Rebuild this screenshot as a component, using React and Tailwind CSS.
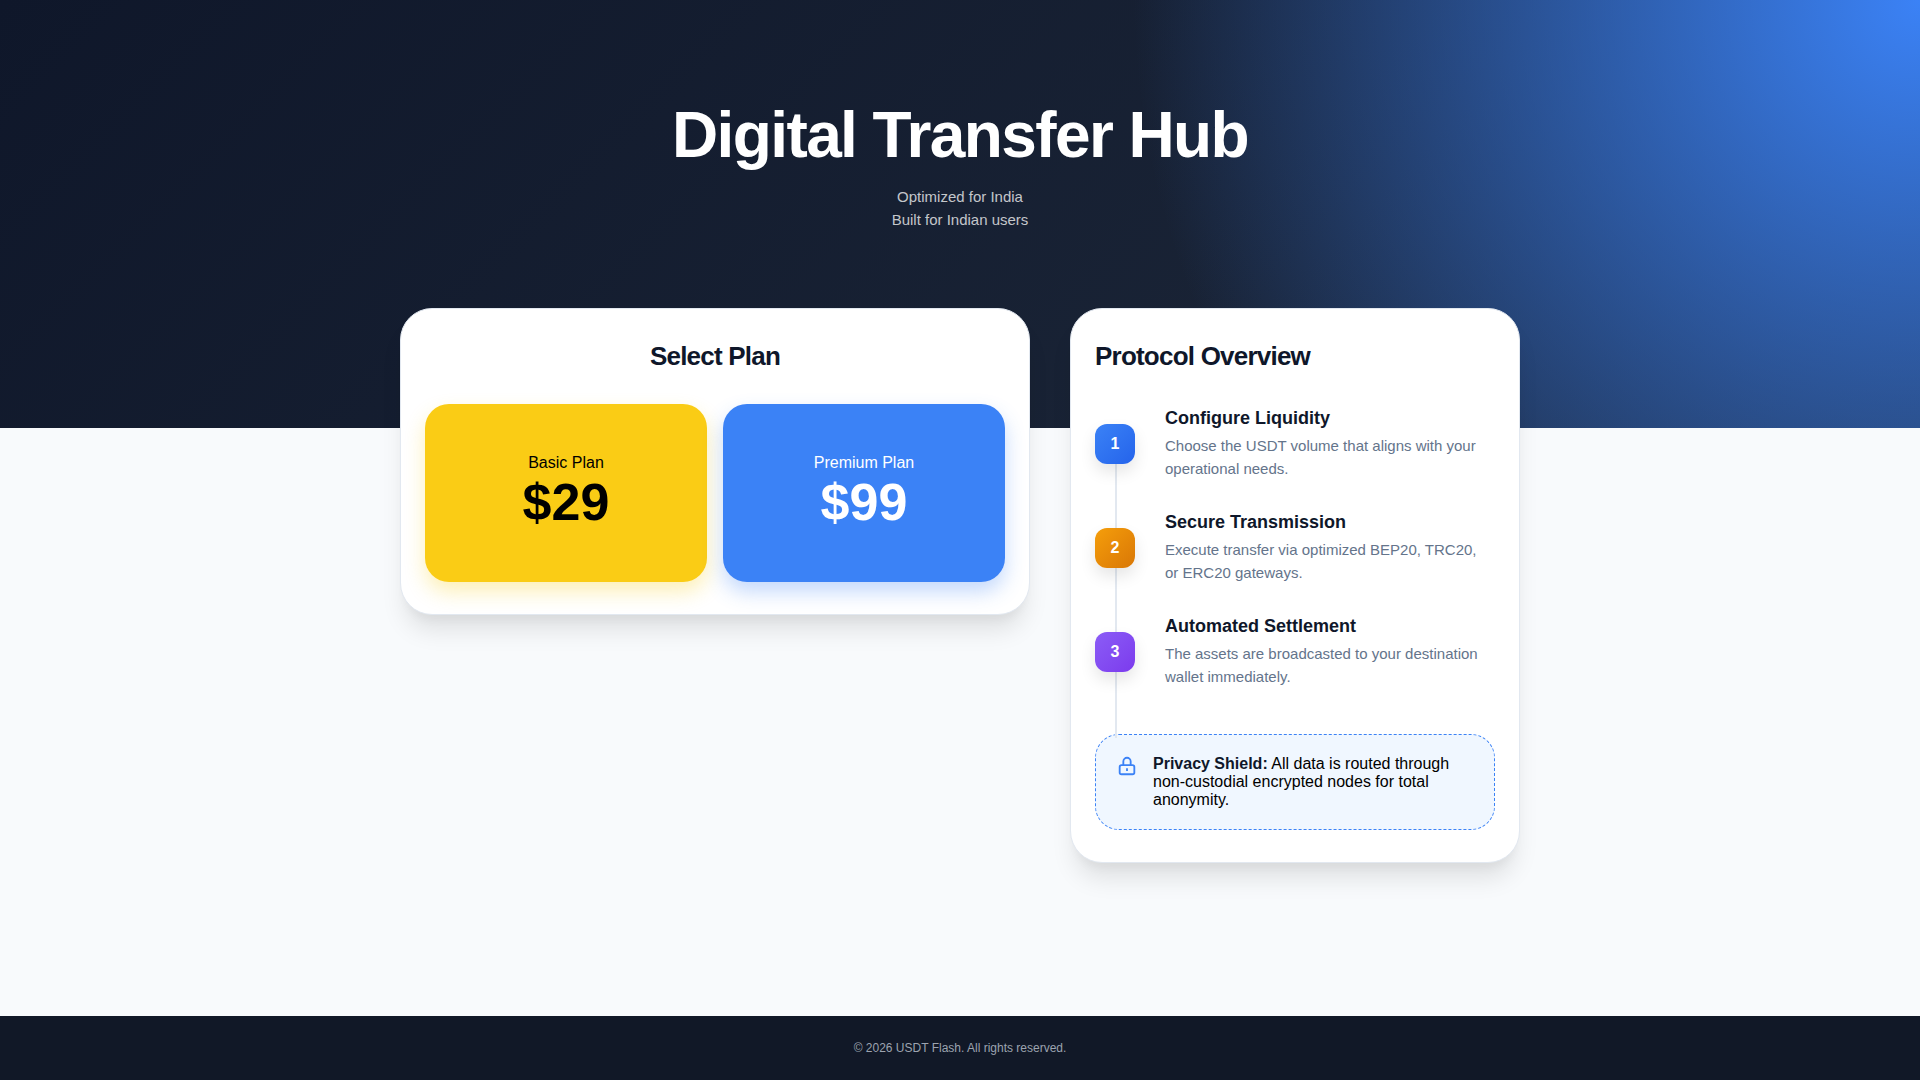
const plans = [
  {
    name: "Basic Plan",
    price: "$29",
    style: "bg-[#facc15] text-black shadow-[0_10px_20px_rgba(250,204,21,0.3)]",
  },
  {
    name: "Premium Plan",
    price: "$99",
    style: "bg-[#3b82f6] text-white shadow-[0_10px_20px_rgba(59,130,246,0.3)]",
  },
];

const steps = [
  {
    title: "Configure Liquidity",
    text: "Choose the USDT volume that aligns with your operational needs.",
    badge: "from-[#3b82f6] to-[#2563eb]",
  },
  {
    title: "Secure Transmission",
    text: "Execute transfer via optimized BEP20, TRC20, or ERC20 gateways.",
    badge: "from-[#f59e0b] to-[#d97706]",
  },
  {
    title: "Automated Settlement",
    text: "The assets are broadcasted to your destination wallet immediately.",
    badge: "from-[#8b5cf6] to-[#7c3aed]",
  },
];

function Card({ children }) {
  return (
    <section className="rounded-[32px] border border-[#e2e8f0] bg-white px-6 py-8 shadow-[0_20px_25px_-5px_rgba(0,0,0,0.1),0_10px_10px_-5px_rgba(0,0,0,0.04)]">
      {children}
    </section>
  );
}

function LockIcon() {
  return (
    <svg
      className="h-[22px] w-[22px] shrink-0"
      viewBox="0 0 24 24"
      fill="none"
      stroke="#3b82f6"
      strokeWidth="2"
      aria-hidden="true"
    >
      <rect x="4" y="11" width="16" height="10" rx="2" />
      <path d="M8 11V7a4 4 0 0 1 8 0v4" />
      <path d="M12 14.5v3" />
    </svg>
  );
}

export default function App() {
  return (
    <div className="flex min-h-screen flex-col bg-[#f8fafc] font-['Liberation_Sans',Arial,sans-serif] text-black">
      <header className="bg-[radial-gradient(circle_at_top_right,#3b82f6,transparent_40%),linear-gradient(135deg,#0f172a,#1e293b)] px-5 pt-[98px] pb-[197px] text-center text-white">
        <h1 className="text-[64px] leading-[74px] font-bold tracking-tight">Digital Transfer Hub</h1>
        <p className="mt-[13px] text-[15px] leading-[23px] text-white/75">
          Optimized for India
          <br />
          Built for Indian users
        </p>
      </header>

      <main className="mx-auto -mt-30 grid w-full max-w-[1200px] flex-1 grid-cols-1 items-start gap-10 px-10 pb-15 lg:grid-cols-[1.4fr_1fr]">
        <Card>
          <h2 className="text-center text-[26px] leading-[31px] font-bold tracking-[-0.03em] text-[#0f172a]">
            Select Plan
          </h2>
          <div className="mt-8 grid grid-cols-2 gap-4">
            {plans.map((plan) => (
              <button
                key={plan.name}
                type="button"
                className={`flex flex-col items-center rounded-3xl px-4 py-[50px] ${plan.style}`}
              >
                <span className="text-base leading-[18px]">{plan.name}</span>
                <span className="text-[52px] leading-[60px] font-bold">{plan.price}</span>
              </button>
            ))}
          </div>
        </Card>

        <Card>
          <h2 className="text-[26px] leading-[31px] font-bold tracking-[-0.03em] text-[#0f172a]">
            Protocol Overview
          </h2>
          <ol className="mt-9 flex flex-col gap-8">
            {steps.map((step, index) => (
              <li key={step.title} className="relative flex items-center gap-[30px]">
                <span className="absolute top-14 left-5 z-10 h-[66px] w-0.5 bg-[#e2e8f0]" />
                <span
                  className={`relative z-20 flex size-10 shrink-0 items-center justify-center rounded-xl bg-linear-135 text-base font-bold text-white shadow-[0_8px_16px_rgba(0,0,0,0.1)] ${step.badge}`}
                >
                  {index + 1}
                </span>
                <div className="pr-3">
                  <h3 className="text-lg leading-[21px] font-bold text-[#0f172a]">{step.title}</h3>
                  <p className="mt-[5px] text-[15px] leading-[23px] text-[#64748b]">{step.text}</p>
                </div>
              </li>
            ))}
          </ol>
          <div className="mt-[46px] flex items-start gap-[15px] rounded-3xl border border-dashed border-[#3b82f6] bg-[#f0f7ff] p-5">
            <LockIcon />
            <p className="text-base leading-[18px]">
              <strong className="text-[#0f172a]">Privacy Shield:</strong> All data is routed through
              non-custodial encrypted nodes for total anonymity.
            </p>
          </div>
        </Card>
      </main>

      <footer className="bg-[#111827] px-5 py-6 text-center text-xs leading-4 text-[#9ca3af]">
        © 2026 USDT Flash. All rights reserved.
      </footer>
    </div>
  );
}
